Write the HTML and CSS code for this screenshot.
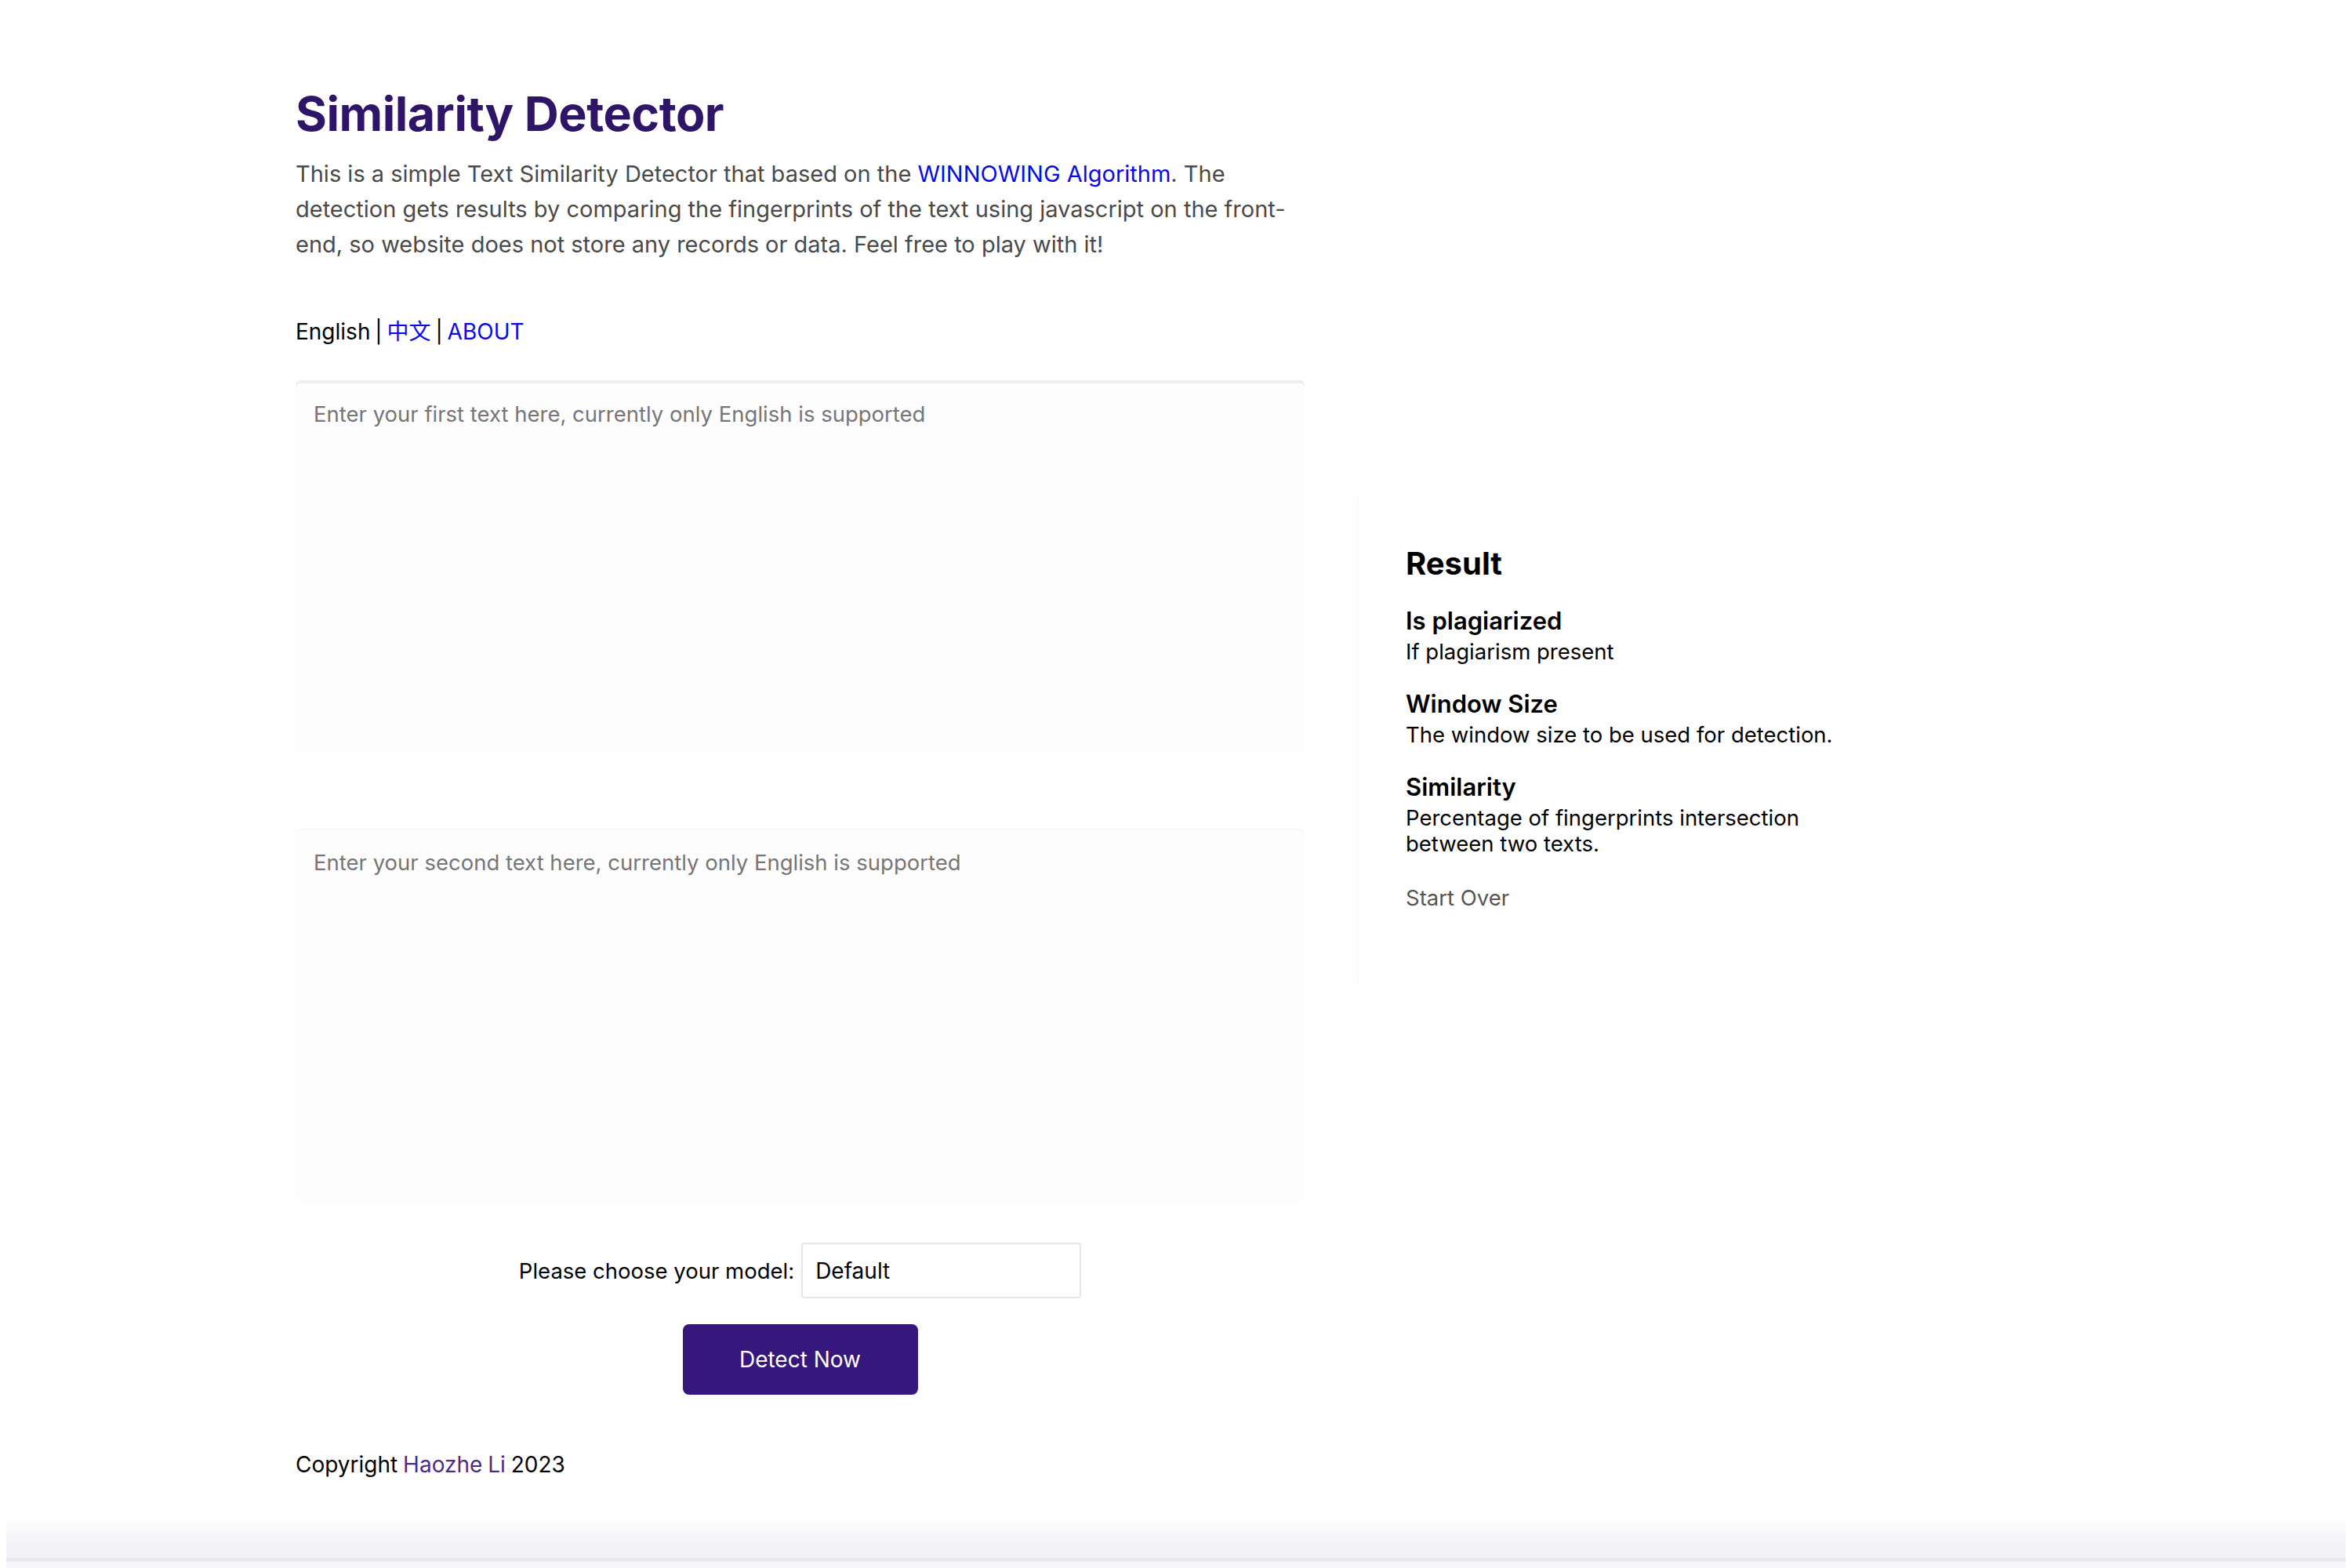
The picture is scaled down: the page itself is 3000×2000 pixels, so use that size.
FILE: index.html
```html
<!DOCTYPE html>
<html lang="en">
<head>
<meta charset="utf-8">
<title>Similarity Detector</title>
<link rel="stylesheet" href="styles.css">
</head>
<body>
<div class="page">
  <main class="main-col">
    <h1 class="title">Similarity Detector</h1>
    <p class="intro">This is a simple Text Similarity Detector that based on the <a class="link" href="#">WINNOWING Algorithm</a>. The detection gets results by comparing the fingerprints of the text using javascript on the front-end, so website does not store any records or data. Feel free to play with it!</p>
    <div class="lang">English | <a class="link" href="#">中文</a> | <a class="link" href="#">ABOUT</a></div>
    <textarea class="text-box text-box--first" placeholder="Enter your first text here, currently only English is supported"></textarea>
    <textarea class="text-box text-box--second" placeholder="Enter your second text here, currently only English is supported"></textarea>
    <div class="model-row">
      <label class="model-label" for="model">Please choose your model:</label>
      <div class="select-box" id="model">Default</div>
    </div>
    <div class="btn-row">
      <button class="detect-btn" type="button">Detect Now</button>
    </div>
    <div class="copyright">Copyright <a class="author" href="#">Haozhe Li</a> 2023</div>
  </main>
  <aside class="result-panel">
    <h2 class="result-title">Result</h2>
    <div class="result-item">
      <div class="item-title">Is plagiarized</div>
      <div class="item-desc">If plagiarism present</div>
    </div>
    <div class="result-item">
      <div class="item-title">Window Size</div>
      <div class="item-desc">The window size to be used for detection.</div>
    </div>
    <div class="result-item">
      <div class="item-title">Similarity</div>
      <div class="item-desc">Percentage of fingerprints intersection between two texts.</div>
    </div>
    <div class="start-over">Start Over</div>
  </aside>
</div>
<div class="bottom-band"></div>
</body>
</html>
```

FILE: styles.css
```css
html, body {
  margin: 0;
  padding: 0;
  background: #ffffff;
}
body {
  font-family: "Inter", "Noto Sans CJK SC", sans-serif;
  color: #111;
  min-height: 2000px;
  display: flex;
  flex-direction: column;
}
.page {
  display: flex;
  align-items: flex-start;
  padding: 108px 0 0 377px;
}
.main-col {
  width: 1287px;
  display: flex;
  flex-direction: column;
}
.title {
  margin: 0;
  font-size: 61px;
  line-height: 74px;
  font-weight: 700;
  color: #2f1568;
  letter-spacing: -0.5px;
}
.intro {
  margin: 17px 0 0;
  font-size: 29px;
  line-height: 45px;
  color: #4a4a4a;
}
.link {
  color: #0a0ae6;
  text-decoration: none;
}
.lang {
  margin-top: 67px;
  font-size: 28px;
  line-height: 45px;
  color: #000;
  word-spacing: -2px;
}
.text-box {
  display: block;
  box-sizing: border-box;
  width: 100%;
  height: 476px;
  margin: 39px 0 0;
  padding: 25px 23px;
  border: none;
  border-radius: 6px;
  background: #fefdfe;
  font-family: "Inter", sans-serif;
  font-size: 27.5px;
  line-height: 36px;
  resize: none;
  outline: none;
}
.text-box::placeholder {
  color: #767676;
}
.text-box--first {
  box-shadow: inset 0 4px 0 #efefef, 0 0 3px rgba(0,0,0,0.02);
}
.text-box--second {
  margin-top: 96px;
  box-shadow: inset 0 2px 0 #f8f8f8, 0 0 3px rgba(0,0,0,0.02);
}
.model-row {
  margin-top: 52px;
  display: flex;
  justify-content: center;
  align-items: center;
  gap: 9px;
}
.model-label {
  font-size: 27.5px;
  color: #000;
}
.select-box {
  box-sizing: border-box;
  width: 357px;
  height: 71px;
  border: 2px solid #e6e6e8;
  border-radius: 4px;
  background: #fff;
  padding: 0 16px;
  display: flex;
  align-items: center;
  font-size: 28px;
  color: #000;
}
.btn-row {
  margin-top: 33px;
  display: flex;
  justify-content: center;
}
.detect-btn {
  width: 300px;
  height: 90px;
  border: none;
  border-radius: 8px;
  background: #36187c;
  color: #ffffff;
  font-family: "Inter", sans-serif;
  font-size: 28px;
  cursor: pointer;
}
.copyright {
  margin-top: 67px;
  font-size: 28px;
  line-height: 45px;
  color: #000;
  word-spacing: -1px;
}
.author {
  color: #4b2c85;
  text-decoration: none;
}
.result-panel {
  margin: 525px 0 0 67px;
  width: 560px;
  padding: 62px 62px 94px 60px;
  box-shadow: -6px 0 12px rgba(60, 20, 120, 0.015);
  border-left: 2px solid #fbfafc;
}
.result-title {
  margin: 0;
  font-size: 40px;
  line-height: 48px;
  font-weight: 700;
  color: #000;
}
.result-item {
  margin-top: 29px;
}
.result-item + .result-item {
  margin-top: 30px;
}
.item-title {
  font-size: 31px;
  line-height: 40px;
  font-weight: 600;
  color: #000;
}
.item-desc {
  margin-top: 3px;
  font-size: 27.5px;
  line-height: 33px;
  color: #000;
}
.start-over {
  margin-top: 35px;
  font-size: 27.5px;
  line-height: 34px;
  color: #555;
}
.bottom-band {
  margin: auto 8px 0;
  height: 63px;
  background: linear-gradient(to bottom, #ffffff 0, #f4f3f6 26px, #f4f3f6 50px, #e9e8eb 50px, #e9e8eb 55px, #f6f5f8 55px);
}
```
